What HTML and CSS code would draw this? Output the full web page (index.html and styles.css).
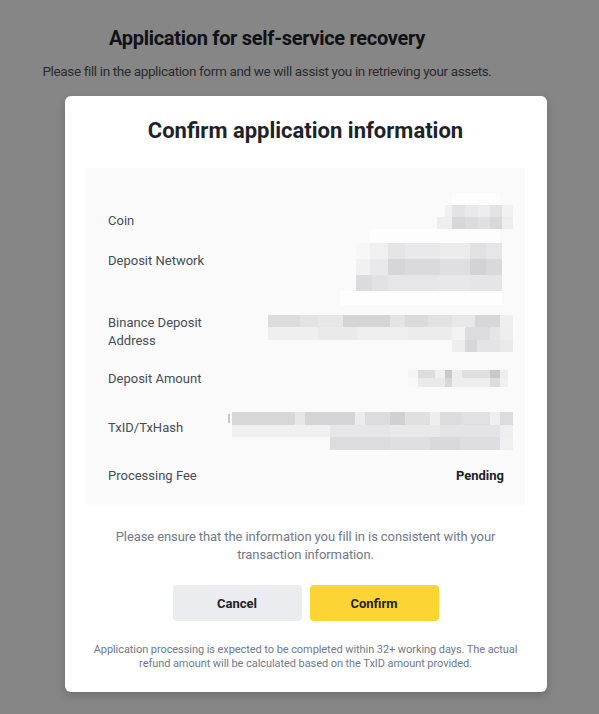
FILE: index.html
```html
<!DOCTYPE html>
<html lang="en">
<head>
<meta charset="utf-8">
<title>Application for self-service recovery</title>
<link rel="stylesheet" href="styles.css">
</head>
<body>
<div class="page">
  <header class="head">
    <h1 class="head-title">Application for self-service recovery</h1>
    <p class="head-sub">Please fill in the application form and we will assist you in retrieving your assets.</p>
  </header>

  <div class="modal">
    <h2 class="modal-title">Confirm application information</h2>

    <div class="info">
      <div class="row row-coin">
        <span class="label">Coin</span>
        <svg class="mosaic" width="76" height="18" viewBox="437 211 76 18" overflow="visible">
          <rect x="452" y="193" width="48" height="12" fill="#fdfdfd"/>
          <rect x="445" y="205" width="7" height="12" fill="#f0f0f0"/>
          <rect x="452" y="205" width="13" height="12" fill="#e3e3e5"/>
          <rect x="465" y="205" width="13" height="12" fill="#e9e9eb"/>
          <rect x="478" y="205" width="12" height="12" fill="#ededee"/>
          <rect x="490" y="205" width="12" height="12" fill="#e3e3e5"/>
          <rect x="502" y="205" width="11" height="12" fill="#f1f1f1"/>
          <rect x="437" y="217" width="15" height="12" fill="#eeeeef"/>
          <rect x="452" y="217" width="13" height="12" fill="#d7d7d9"/>
          <rect x="465" y="217" width="13" height="12" fill="#dcdcde"/>
          <rect x="478" y="217" width="12" height="12" fill="#e0e0e2"/>
          <rect x="490" y="217" width="12" height="12" fill="#d8d8da"/>
          <rect x="502" y="217" width="11" height="12" fill="#ededed"/>
        </svg>
      </div>

      <div class="row row-network">
        <span class="label">Deposit Network</span>
        <svg class="mosaic" width="173" height="18" viewBox="340 251 173 18" overflow="visible">
          <rect x="370" y="229" width="130" height="14" fill="#fdfdfd"/>
          <rect x="356" y="243" width="14" height="16" fill="#f7f7f7"/>
          <rect x="370" y="243" width="18" height="16" fill="#f0f0f1"/>
          <rect x="388" y="243" width="17" height="16" fill="#e5e5e7"/>
          <rect x="405" y="243" width="35" height="16" fill="#e9e9eb"/>
          <rect x="440" y="243" width="30" height="16" fill="#ececed"/>
          <rect x="470" y="243" width="16" height="16" fill="#e1e1e3"/>
          <rect x="486" y="243" width="16" height="16" fill="#e6e6e8"/>
          <rect x="356" y="259" width="14" height="16" fill="#f1f1f1"/>
          <rect x="370" y="259" width="18" height="16" fill="#e9e9eb"/>
          <rect x="388" y="259" width="17" height="16" fill="#d6d6d8"/>
          <rect x="405" y="259" width="35" height="16" fill="#dadadc"/>
          <rect x="440" y="259" width="30" height="16" fill="#dfdfe1"/>
          <rect x="470" y="259" width="16" height="16" fill="#d3d3d5"/>
          <rect x="486" y="259" width="16" height="16" fill="#d9d9db"/>
          <rect x="356" y="275" width="16" height="16" fill="#dbdbdd"/>
          <rect x="372" y="275" width="16" height="16" fill="#e2e2e4"/>
          <rect x="388" y="275" width="50" height="16" fill="#e6e6e8"/>
          <rect x="438" y="275" width="32" height="16" fill="#e8e8ea"/>
          <rect x="470" y="275" width="32" height="16" fill="#e5e5e7"/>
          <rect x="340" y="291" width="162" height="14" fill="#fefefe"/>
        </svg>
      </div>

      <div class="row row-address">
        <span class="label">Binance Deposit<br>Address</span>
        <svg class="mosaic" width="245" height="36" viewBox="268 313 245 36" overflow="visible">
          <rect x="268" y="315" width="32" height="12" fill="#dcdcde"/>
          <rect x="300" y="315" width="18" height="12" fill="#e3e3e5"/>
          <rect x="318" y="315" width="25" height="12" fill="#e7e7e9"/>
          <rect x="343" y="315" width="47" height="12" fill="#d5d5d7"/>
          <rect x="390" y="315" width="15" height="12" fill="#e4e4e5"/>
          <rect x="405" y="315" width="23" height="12" fill="#dbdbdd"/>
          <rect x="428" y="315" width="24" height="12" fill="#e2e2e4"/>
          <rect x="452" y="315" width="23" height="12" fill="#e8e8e9"/>
          <rect x="475" y="315" width="25" height="12" fill="#d7d7d9"/>
          <rect x="500" y="315" width="13" height="12" fill="#efefef"/>
          <rect x="268" y="327" width="50" height="13" fill="#efeff0"/>
          <rect x="318" y="327" width="40" height="13" fill="#eaeaeb"/>
          <rect x="358" y="327" width="50" height="13" fill="#efefef"/>
          <rect x="408" y="327" width="44" height="13" fill="#ececed"/>
          <rect x="452" y="327" width="13" height="13" fill="#f3f3f3"/>
          <rect x="465" y="327" width="25" height="13" fill="#dcdcde"/>
          <rect x="490" y="327" width="10" height="13" fill="#e6e6e7"/>
          <rect x="500" y="327" width="13" height="13" fill="#eeeeee"/>
          <rect x="452" y="340" width="13" height="12" fill="#eeeeee"/>
          <rect x="465" y="340" width="12" height="12" fill="#d7d7d9"/>
          <rect x="477" y="340" width="23" height="12" fill="#e4e4e6"/>
          <rect x="500" y="340" width="13" height="12" fill="#eaeaea"/>
        </svg>
      </div>

      <div class="row row-amount">
        <span class="label">Deposit Amount</span>
        <svg class="mosaic" width="105" height="18" viewBox="408 369 105 18" overflow="visible">
          <rect x="408" y="370" width="10" height="8" fill="#f4f4f4"/>
          <rect x="418" y="370" width="17" height="8" fill="#dcdcde"/>
          <rect x="435" y="370" width="10" height="8" fill="#f0f0f0"/>
          <rect x="445" y="370" width="7" height="8" fill="#c9c9cb"/>
          <rect x="452" y="370" width="10" height="8" fill="#eeeeee"/>
          <rect x="462" y="370" width="28" height="8" fill="#dfdfe1"/>
          <rect x="490" y="370" width="10" height="8" fill="#c9c9cb"/>
          <rect x="500" y="370" width="8" height="8" fill="#eeeeee"/>
          <rect x="408" y="378" width="10" height="9" fill="#f8f8f8"/>
          <rect x="418" y="378" width="27" height="9" fill="#e9e9ea"/>
          <rect x="445" y="378" width="7" height="9" fill="#d7d7d9"/>
          <rect x="452" y="378" width="38" height="9" fill="#eeeeee"/>
          <rect x="490" y="378" width="10" height="9" fill="#dcdcdc"/>
          <rect x="500" y="378" width="8" height="9" fill="#f0f0f0"/>
        </svg>
      </div>

      <div class="row row-tx">
        <span class="label">TxID/TxHash</span>
        <svg class="mosaic" width="285" height="18" viewBox="228 418 285 18" overflow="visible">
          <rect x="228" y="414" width="2" height="9" fill="#c8c8c8"/>
          <rect x="232" y="412" width="63" height="13" fill="#d7d7d9"/>
          <rect x="295" y="412" width="10" height="13" fill="#e6e6e6"/>
          <rect x="305" y="412" width="50" height="13" fill="#d5d5d7"/>
          <rect x="355" y="412" width="10" height="13" fill="#ececec"/>
          <rect x="365" y="412" width="25" height="13" fill="#dcdcde"/>
          <rect x="390" y="412" width="15" height="13" fill="#d0d0d2"/>
          <rect x="405" y="412" width="25" height="13" fill="#e0e0e1"/>
          <rect x="430" y="412" width="10" height="13" fill="#eeeeee"/>
          <rect x="440" y="412" width="22" height="13" fill="#dcdcde"/>
          <rect x="462" y="412" width="28" height="13" fill="#e1e1e3"/>
          <rect x="490" y="412" width="10" height="13" fill="#efefef"/>
          <rect x="500" y="412" width="13" height="13" fill="#dcdcde"/>
          <rect x="232" y="425" width="98" height="12" fill="#f0f0f0"/>
          <rect x="330" y="425" width="60" height="12" fill="#e6e6e8"/>
          <rect x="390" y="425" width="50" height="12" fill="#e9e9ea"/>
          <rect x="440" y="425" width="60" height="12" fill="#e4e4e6"/>
          <rect x="500" y="425" width="13" height="12" fill="#eeeeee"/>
          <rect x="330" y="437" width="60" height="13" fill="#dcdcde"/>
          <rect x="390" y="437" width="40" height="13" fill="#dfdfe1"/>
          <rect x="430" y="437" width="30" height="13" fill="#d9d9db"/>
          <rect x="460" y="437" width="40" height="13" fill="#dedee0"/>
          <rect x="500" y="437" width="13" height="13" fill="#f0f0f0"/>
          <rect x="330" y="450" width="170" height="4" fill="#fdfdfd"/>
        </svg>
      </div>

      <div class="row row-fee">
        <span class="label">Processing Fee</span>
        <span class="value">Pending</span>
      </div>
    </div>

    <p class="note">Please ensure that the information you fill in is consistent with your transaction information.</p>

    <div class="actions">
      <button class="btn btn-cancel" type="button">Cancel</button>
      <button class="btn btn-confirm" type="button">Confirm</button>
    </div>

    <p class="foot">Application processing is expected to be completed within 32+ working days. The actual refund amount will be calculated based on the TxID amount provided.</p>
  </div>
</div>
</body>
</html>
```

FILE: styles.css
```css
* { box-sizing: border-box; }

html, body {
  margin: 0;
  padding: 0;
}

body {
  background: #868686;
  font-family: Roboto, "Liberation Sans", Arial, sans-serif;
  color: #1e2329;
  height: 714px;
  overflow: hidden;
}

.page {
  padding-top: 24px;
}

.head {
  width: 534px;
  text-align: center;
}

.head-title {
  margin: 0;
  font-size: 20px;
  line-height: 28px;
  font-weight: 700;
  letter-spacing: -0.3px;
  color: #111214;
}

.head-sub {
  margin: 9px 0 0;
  font-size: 13.5px;
  line-height: 20px;
  letter-spacing: -0.36px;
  color: #2a2b2d;
}

.modal {
  margin: 15px 0 0 65px;
  width: 482px;
  height: 596px;
  background: #fff;
  border-radius: 6px;
  box-shadow: 0 4px 10px rgba(0, 0, 0, 0.18);
  padding: 20px 22px 21px 21px;
  display: flex;
  flex-direction: column;
  align-items: center;
}

.modal-title {
  margin: 0;
  font-size: 22px;
  line-height: 30px;
  font-weight: 700;
  color: #1e2329;
  text-align: center;
}

.info {
  margin-top: 22px;
  width: 439px;
  height: 337px;
  background: #fafafa;
  padding: 43px 12px 0 22px;
  display: flex;
  flex-direction: column;
}

.row {
  display: flex;
  justify-content: space-between;
  align-items: center;
  height: 18px;
}

.row-network { margin-top: 22px; }
.row-address { margin-top: 44px; height: 36px; }
.row-amount { margin-top: 20px; }
.row-tx { margin-top: 31px; }
.row-fee { margin-top: 30px; }

.label {
  font-size: 13px;
  line-height: 18px;
  padding-top: 2px;
  color: #474d57;
}

.mosaic {
  display: block;
  flex: none;
}

.value {
  font-size: 13px;
  line-height: 18px;
  padding-top: 2px;
  font-weight: 700;
  color: #1e2329;
  margin-right: 9px;
}

.note {
  margin: 23px 0 0;
  width: 400px;
  font-size: 13px;
  line-height: 18px;
  letter-spacing: -0.1px;
  color: #707a8a;
  text-align: center;
}

.actions {
  margin-top: 21px;
  display: flex;
  gap: 8px;
}

.btn {
  width: 129px;
  height: 36px;
  border: 0;
  border-radius: 4px;
  font-family: inherit;
  font-size: 13px;
  font-weight: 700;
  color: #1e2329;
  padding: 0;
}

.btn-cancel { background: #eaecef; }
.btn-confirm { background: #fcd535; }

.foot {
  margin: 22px 0 0;
  width: 440px;
  font-size: 11px;
  line-height: 14px;
  letter-spacing: -0.07px;
  color: #707a8a;
  text-align: center;
}
```
